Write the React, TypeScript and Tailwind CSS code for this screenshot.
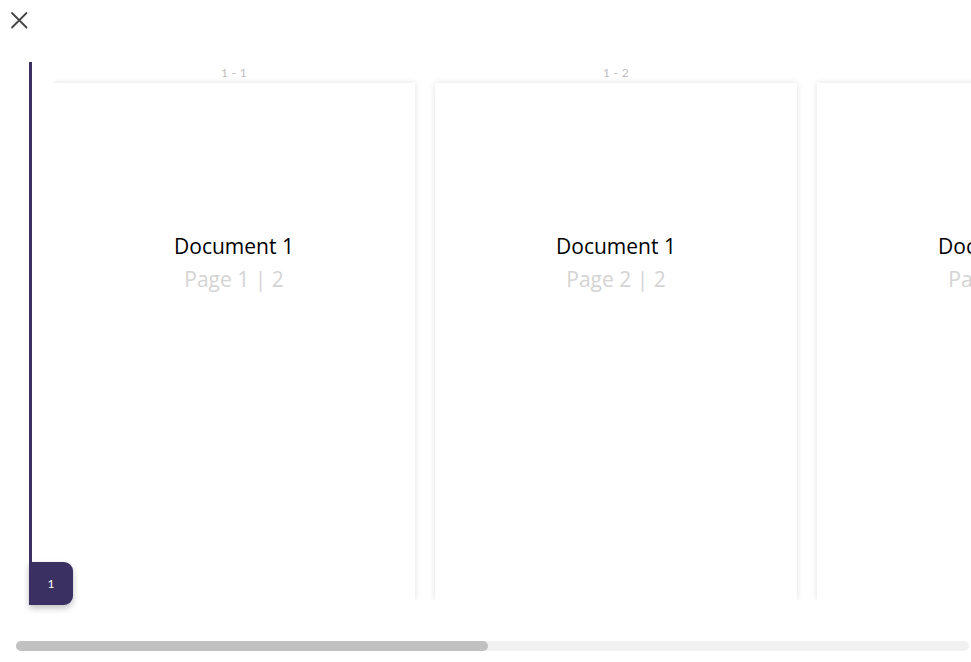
import { useState } from "react";

type Page = { id: string; doc: string; page: number; total: number };

const PAGES: Page[] = [
  { id: "1 - 1", doc: "Document 1", page: 1, total: 2 },
  { id: "1 - 2", doc: "Document 1", page: 2, total: 2 },
  { id: "2 - 1", doc: "Document 2", page: 1, total: 1 },
];

function CloseIcon() {
  return (
    <svg width="18" height="18" viewBox="0 0 18 18" fill="none">
      <path d="M2 2L16.5 16.5M16.5 2L2 16.5" stroke="#444" strokeWidth="1.8" strokeLinecap="round" />
    </svg>
  );
}

function PageCard({ page }: { page: Page }) {
  return (
    <div className="flex w-[362px] shrink-0 flex-col items-center">
      <div className="flex h-[22px] items-center font-['Lato',sans-serif] text-[12px] tracking-wide text-[#bfbfbf]">
        {page.id}
      </div>
      <div className="flex h-[530px] w-full flex-col items-center bg-white pt-[150px] font-['Open_Sans',sans-serif] shadow-[0_0_6px_rgba(0,0,0,0.13)]">
        <span className="text-[21px] leading-[26px] text-black">{page.doc}</span>
        <span className="mt-[7px] text-[21px] leading-[26px] text-[#d4d4d4]">
          Page {page.page} | {page.total}
        </span>
      </div>
    </div>
  );
}

export default function App() {
  const [active] = useState(1);

  return (
    <div className="relative h-[662px] w-[971px] overflow-hidden bg-white font-['Lato','Open_Sans',sans-serif]">
      <div className="h-[62px] pl-[10px] pt-[11px]">
        <button className="flex h-[18px] w-[18px] items-center justify-center">
          <CloseIcon />
        </button>
      </div>

      <div className="flex h-[578px] items-start pl-[29px]">
        <div className="flex w-[3px] shrink-0 flex-col">
          <div className="h-[500px] w-[3px] bg-[#3a3162]" />
          <div className="relative z-10 flex h-[43px] w-[44px] items-center justify-center rounded-r-[9px] bg-[#3a3162] text-[12px] text-white shadow-[0_3px_6px_rgba(0,0,0,0.25)]">
            {active}
          </div>
        </div>
        <div className="ml-[21px] flex h-[538px] gap-[20px] overflow-hidden">
          {PAGES.map((p) => (
            <PageCard key={p.id} page={p} />
          ))}
        </div>
      </div>

      <div className="ml-[16px] mt-[1px] h-[10px] w-[953px] rounded-full bg-[#f1f1f1]">
        <div className="h-[10px] w-[472px] rounded-full bg-[#c1c1c1]" />
      </div>
    </div>
  );
}
